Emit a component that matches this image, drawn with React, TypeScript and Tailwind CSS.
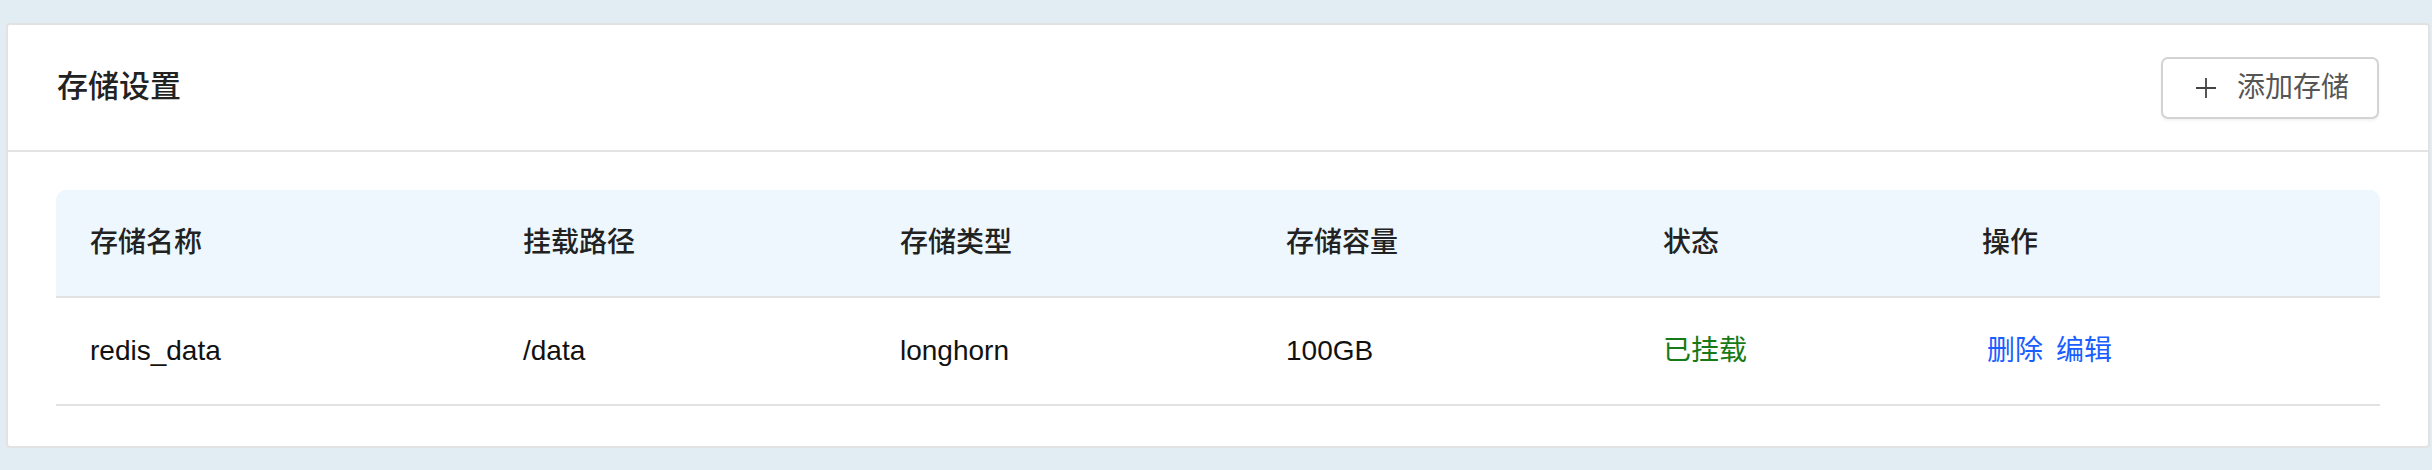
import React from 'react'

const font = { fontFamily: '"Liberation Sans", "Noto Sans CJK SC", sans-serif' }

const columns = ['存储名称', '挂载路径', '存储类型', '存储容量', '状态', '操作']

const rows = [
  { name: 'redis_data', path: '/data', type: 'longhorn', size: '100GB', status: '已挂载' },
]

function PlusIcon() {
  return (
    <svg width="22" height="22" viewBox="0 0 22 22" className="shrink-0">
      <path d="M11 1v20M1 11h20" stroke="#444" strokeWidth="1.8" fill="none" />
    </svg>
  )
}

export default function App() {
  return (
    <div className="min-h-screen bg-[#e2ecf3] pl-[6px] pr-[2px] pt-[23px] pb-[20px]" style={font}>
      <div className="bg-white border-2 border-[#e2e2e2] rounded-[4px]">
        {/* header */}
        <div className="h-[127px] px-[49px] flex items-center justify-between border-b-2 border-[#e3e3e3]">
          <h2 className="text-[31px] font-medium text-[#222]">存储设置</h2>
          <button className="h-[62px] w-[218px] flex items-center pl-[32px] gap-[20px] border-2 border-[#d3d3d3] rounded-[7px] bg-white shadow-[0_2px_3px_rgba(0,0,0,0.05)] text-[28px] text-[#555]">
            <PlusIcon />
            <span>添加存储</span>
          </button>
        </div>

        {/* table */}
        <div className="px-[48px] pt-[38px] pb-[40px]">
          <div className="grid grid-cols-[433px_377px_386px_377px_319px_1fr] h-[106px] items-center bg-[#edf7fd] rounded-t-[10px] text-[28px] font-medium text-[#222]">
            {columns.map(c => (
              <div key={c} className="pl-[34px]">
                {c}
              </div>
            ))}
          </div>
          <div className="h-[2px] bg-[#e2e2e2]" />
          {rows.map(r => (
            <div key={r.name}>
              <div className="grid grid-cols-[433px_377px_386px_377px_319px_1fr] h-[106px] items-center text-[28px] text-[#111]">
                <div className="pl-[34px]">{r.name}</div>
                <div className="pl-[34px]">{r.path}</div>
                <div className="pl-[34px]">{r.type}</div>
                <div className="pl-[34px]">{r.size}</div>
                <div className="pl-[34px] text-[#177a17]">{r.status}</div>
                <div className="pl-[39px] flex gap-[13px] text-[#1b5eff]">
                  <a className="cursor-pointer">删除</a>
                  <a className="cursor-pointer">编辑</a>
                </div>
              </div>
              <div className="h-[2px] bg-[#e2e2e2]" />
            </div>
          ))}
        </div>
      </div>
    </div>
  )
}
